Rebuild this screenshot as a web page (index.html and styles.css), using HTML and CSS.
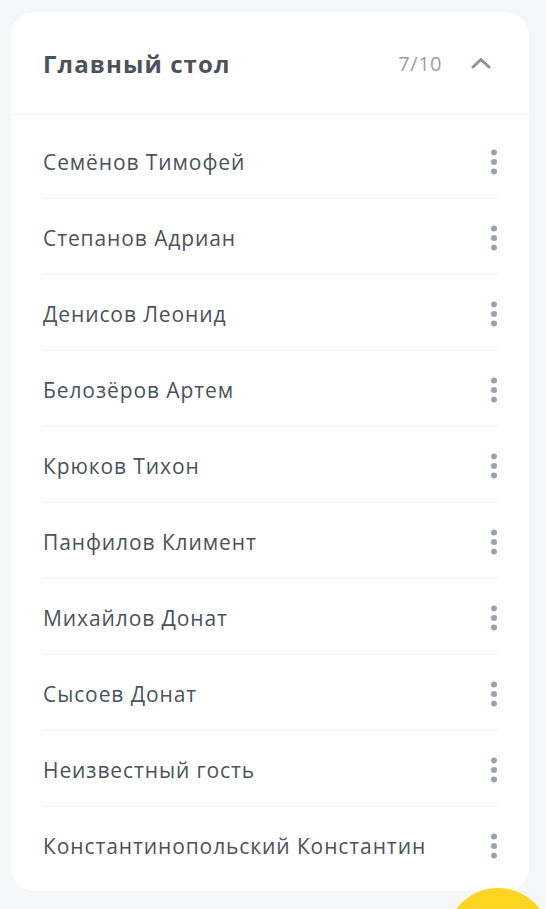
FILE: index.html
```html
<!DOCTYPE html>
<html lang="ru">
<head>
    <meta charset="UTF-8">
    <meta name="viewport" content="width=device-width, initial-scale=1.0">
    <title>Главный стол</title>
    <link rel="stylesheet" href="styles.css">
</head>
<body>
    <div class="screen">
        <div class="table-card">
            <div class="table-header">
                <span class="table-title">Главный стол</span>
                <span class="table-count">7/10</span>
                <button class="collapse-btn" aria-label="Свернуть">
                    <svg width="20" height="12" viewBox="0 0 20 12"><path d="M2 10 L10 2.5 L18 10" fill="none" stroke="#8c959f" stroke-width="3" stroke-linecap="round" stroke-linejoin="round"/></svg>
                </button>
            </div>
            <ul class="guest-list">
                <li class="guest"><span>Семёнов Тимофей</span><i class="kebab"></i></li>
                <li class="guest"><span>Степанов Адриан</span><i class="kebab"></i></li>
                <li class="guest"><span>Денисов Леонид</span><i class="kebab"></i></li>
                <li class="guest"><span>Белозёров Артем</span><i class="kebab"></i></li>
                <li class="guest"><span>Крюков Тихон</span><i class="kebab"></i></li>
                <li class="guest"><span>Панфилов Климент</span><i class="kebab"></i></li>
                <li class="guest"><span>Михайлов Донат</span><i class="kebab"></i></li>
                <li class="guest"><span>Сысоев Донат</span><i class="kebab"></i></li>
                <li class="guest"><span>Неизвестный гость</span><i class="kebab"></i></li>
                <li class="guest"><span>Константинопольский Константин</span><i class="kebab"></i></li>
            </ul>
        </div>
        <button class="fab" aria-label="Добавить"></button>
    </div>
</body>
</html>
```

FILE: styles.css
```css
body {
    margin: 0;
    background: #f5f6f8;
    font-family: "Open Sans", "Noto Sans", sans-serif;
    color: #4b525c;
}
.screen {
    position: relative;
    height: 909px;
    overflow: hidden;
    padding-top: 12px;
    box-sizing: border-box;
}
.table-card {
    margin: 0 17px 0 11px;
    background: #fff;
    border-radius: 24px;
}
.table-header {
    display: flex;
    align-items: center;
    height: 102px;
    padding: 0 36px 0 32px;
    border-bottom: 1px solid #eff1f3;
}
.table-title {
    flex: 1;
    font-size: 24px;
    font-weight: 700;
    letter-spacing: 1.1px;
    color: #4b525c;
}
.table-count {
    font-size: 20px;
    letter-spacing: 0.5px;
    color: #9ba1a8;
}
.collapse-btn {
    margin-left: 27px;
    width: 24px;
    height: 24px;
    padding: 0;
    border: none;
    background: none;
    display: flex;
    align-items: center;
    justify-content: center;
}
.guest-list {
    list-style: none;
    margin: 0;
    padding: 8px 31px 8px 32px;
}
.guest {
    display: flex;
    align-items: center;
    justify-content: space-between;
    height: 76px;
    padding-top: 2px;
    box-sizing: border-box;
    border-bottom: 1px solid #eff1f3;
    font-size: 21px;
    letter-spacing: 0.9px;
}
.guest:last-child {
    border-bottom: none;
}
.kebab {
    width: 6px;
    height: 6px;
    border-radius: 50%;
    background: #9aa3ad;
    margin-right: 1px;
    box-shadow: 0 -9.5px 0 #9aa3ad, 0 9.5px 0 #9aa3ad;
}
.fab {
    position: absolute;
    left: 446px;
    top: 888px;
    width: 104px;
    height: 104px;
    border-radius: 50%;
    border: none;
    background: #fdd41f;
}
```
